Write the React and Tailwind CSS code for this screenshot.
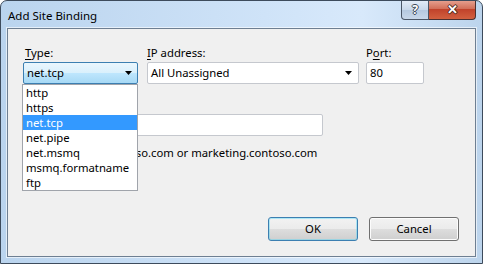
import React from 'react';

const font = { fontFamily: '"Noto Sans", "Open Sans", sans-serif' };

const Arrow = () => (
  <svg width="7" height="4" viewBox="0 0 7 4" className="shrink-0">
    <path d="M0 0h7L3.5 4z" fill="#000" />
  </svg>
);

const items = ['http', 'https', 'net.tcp', 'net.pipe', 'net.msmq', 'msmq.formatname', 'ftp'];

export default function App() {
  return (
    <div
      className="w-[483px] h-[264px] relative overflow-hidden rounded-t-[7px] border border-[#3d4b5c] bg-[linear-gradient(to_right,#bad4ee,#cfe3f8_55%,#d8e9fb_75%,#bcd4ec)] flex flex-col text-[11.3px] text-black"
      style={font}
    >
      {/* title bar */}
      <div className="h-[27px] flex items-start shrink-0">
        <div className="pl-[7px] pt-[7px] leading-[15px] text-[11.5px] text-black">Add Site Binding</div>
        <div className="ml-auto mr-[6px] flex -mt-px">
          <div className="w-[28px] h-[20px] rounded-bl-[4px] border border-[#4a5666] border-t-0 bg-[linear-gradient(#e4edf8,#c9d8ea_50%,#b4c8df_51%,#c8d8ea)] flex items-center justify-center text-white font-bold text-[12px] [text-shadow:1px_0_#3b4756,-1px_0_#3b4756,0_1px_#3b4756,0_-1px_#3b4756]">
            ?
          </div>
          <div className="w-[47px] h-[20px] rounded-br-[4px] border border-[#4a3030] border-t-0 border-l-0 bg-[linear-gradient(#e8a493,#d2705a_45%,#c1432b_50%,#d2603f)] flex items-center justify-center text-white font-bold text-[13px] [text-shadow:1px_0_#4a2418,-1px_0_#4a2418,0_1px_#4a2418,0_-1px_#4a2418]">
            ✕
          </div>
        </div>
      </div>

      {/* client area */}
      <div className="mx-[6px] mb-[6px] flex-1 border border-[#6e7f92] outline outline-white/60 bg-[#f0f0f0] relative flex flex-col pl-[15px] pr-[16px] pt-[16px] pb-[15px]">
        <div className="flex items-start">
          <div className="w-[115px] flex flex-col">
            <div className="leading-[15px] pl-[2px]"><span className="underline underline-offset-2">T</span>ype:</div>
            <div className="mt-[2px] h-[22px] rounded-[2px] border border-[#3c7fb1] bg-[linear-gradient(#eaf6fd,#d9f0fc_50%,#bee6fd_51%,#a7d9f5)] flex items-center pl-[3px] pr-[5px]">
              <span className="flex-1">net.tcp</span>
              <Arrow />
            </div>
          </div>
          <div className="w-[212px] ml-[9px] flex flex-col">
            <div className="leading-[15px]"><span className="underline underline-offset-2">I</span>P address:</div>
            <div className="mt-[2px] h-[22px] rounded-[2px] border border-[#c5c8ce] bg-white flex items-center pl-[3px] pr-[6px]">
              <span className="flex-1">All Unassigned</span>
              <Arrow />
            </div>
          </div>
          <div className="w-[58px] ml-[7px] flex flex-col">
            <div className="leading-[15px]">P<span className="underline underline-offset-2">o</span>rt:</div>
            <div className="mt-[2px] h-[22px] rounded-[2px] border border-[#c5c8ce] bg-white flex items-center pl-[3px]">80</div>
          </div>
        </div>

        <div className="mt-[13px] leading-[15px] pl-[2px]"><span className="underline underline-offset-2">H</span>ost name:</div>
        <div className="mt-[2px] w-[300px] h-[22px] rounded-[2px] border border-[#c5c8ce] bg-white" />
        <div className="mt-[9px] leading-[15px] pl-[2px]">Example: www.contoso.com or marketing.contoso.com</div>

        <div className="mt-auto flex justify-end gap-[11px]">
          <button className="w-[90px] h-[24px] rounded-[3px] border border-[#3c7fb1] bg-[linear-gradient(#f2f2f2,#ebebeb_50%,#dddddd_51%,#cfcfcf)] shadow-[inset_0_0_0_1px_#48d8fb66]">
            OK
          </button>
          <button className="w-[90px] h-[24px] rounded-[3px] border border-[#707070] bg-[linear-gradient(#f2f2f2,#ebebeb_50%,#dddddd_51%,#cfcfcf)] shadow-[inset_0_0_0_1px_#fcfcfc]">
            Cancel
          </button>
        </div>

        {/* open dropdown list */}
        <div className="absolute left-[14px] top-[55px] w-[116px] border border-[#a0a4ab] bg-white flex flex-col">
          {items.map((it) => (
            <div
              key={it}
              className={
                'h-[15px] leading-[15px] pl-[3px] ' + (it === 'net.tcp' ? 'bg-[#3399ff] text-white' : '')
              }
            >
              {it}
            </div>
          ))}
        </div>
      </div>
    </div>
  );
}
